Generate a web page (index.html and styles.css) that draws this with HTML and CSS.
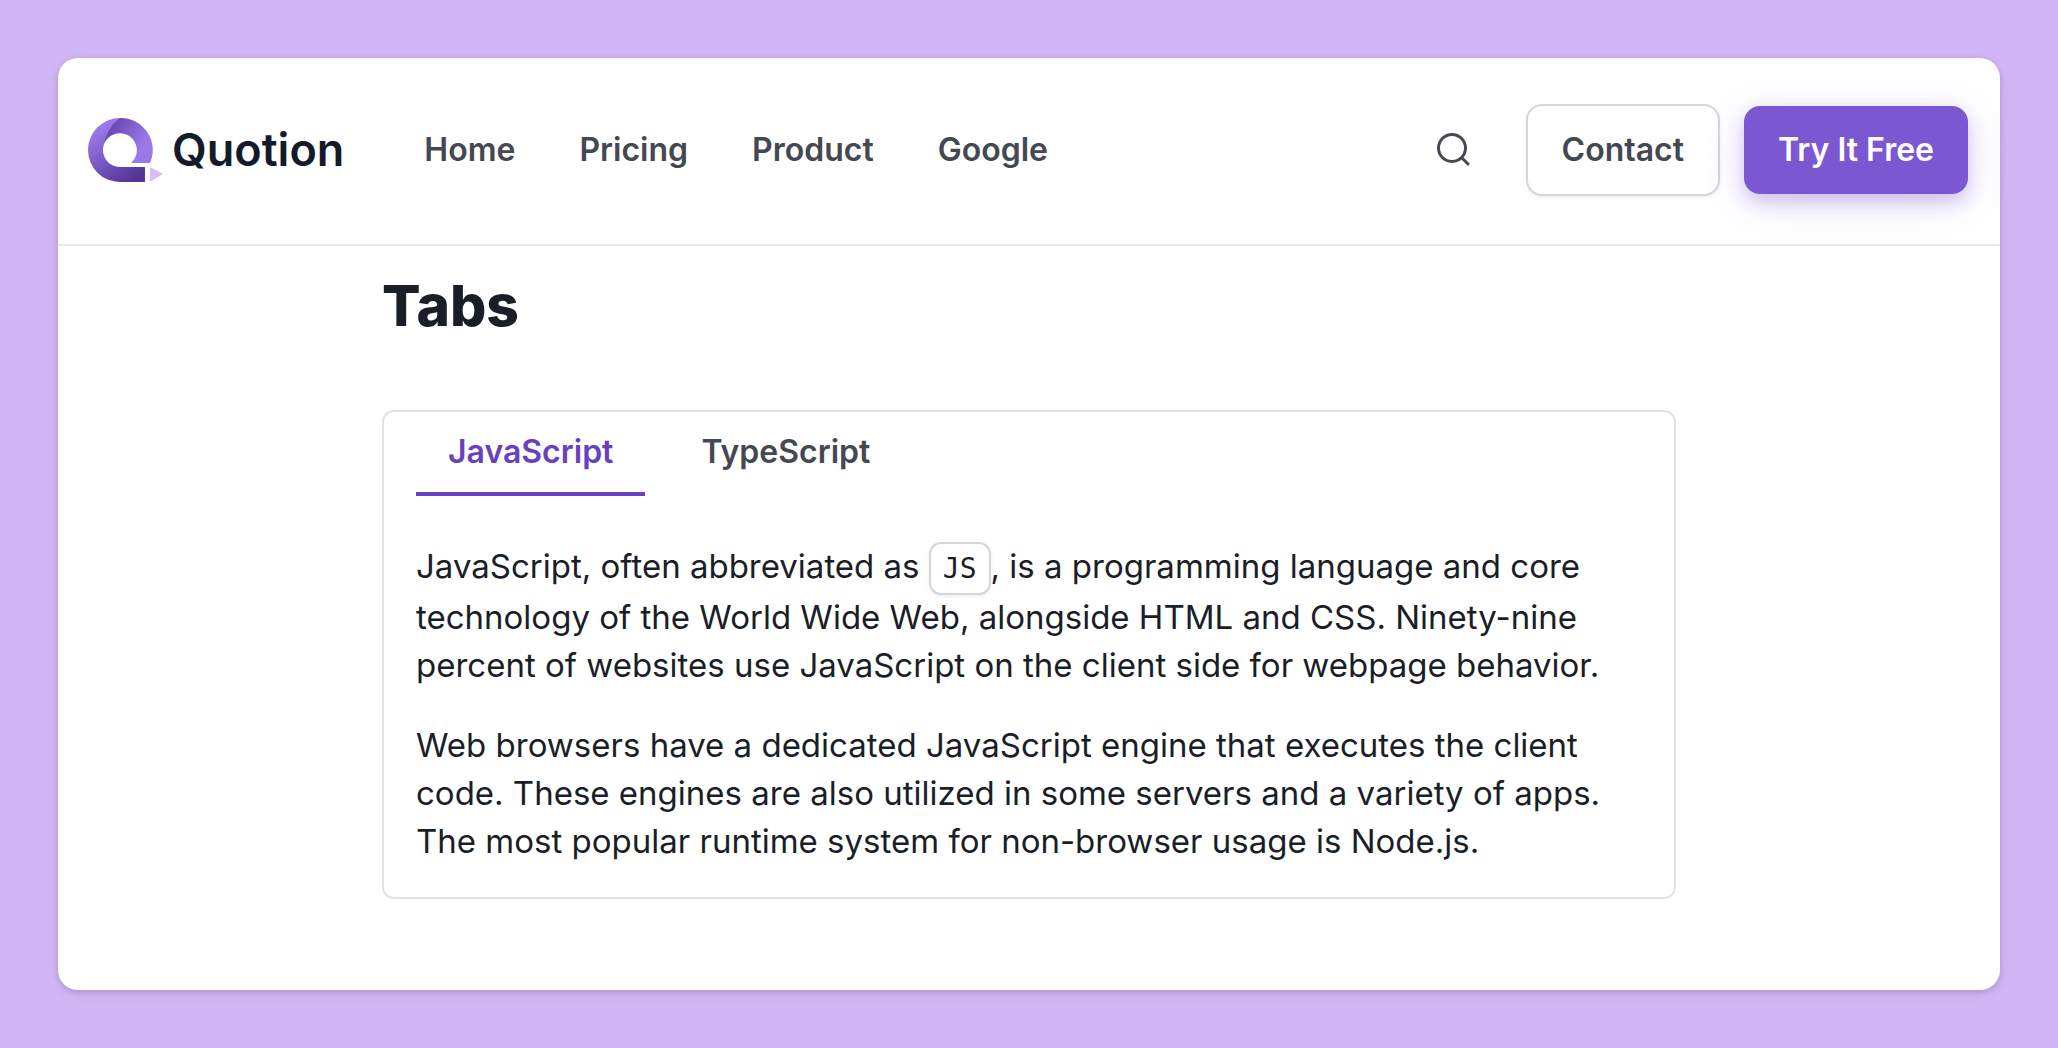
FILE: index.html
```html
<!DOCTYPE html>
<html lang="en">
<head>
    <meta charset="UTF-8">
    <meta name="viewport" content="width=device-width, initial-scale=1.0">
    <title>Quotion - Tabs</title>
    <link rel="stylesheet" href="styles.css">
</head>
<body>
    <div class="page">
        <header class="header">
            <a class="logo" href="#">
                <svg class="logo-mark" width="75" height="64" viewBox="0 0 75 64" aria-hidden="true">
                    <defs>
                        <linearGradient id="tail" x1="10" y1="12" x2="46" y2="62" gradientUnits="userSpaceOnUse">
                            <stop offset="0" stop-color="#9b78e8"/>
                            <stop offset="1" stop-color="#513495"/>
                        </linearGradient>
                        <linearGradient id="ring" x1="22" y1="8" x2="54" y2="28" gradientUnits="userSpaceOnUse">
                            <stop offset="0" stop-color="#6747b0"/>
                            <stop offset="1" stop-color="#9b78e8"/>
                        </linearGradient>
                    </defs>
                    <path fill="url(#ring)" d="M32 0A32 32 0 0 1 62 45H43A17 17 0 1 0 16 26C15 14 22 4 32 0Z"/>
                    <path fill="url(#tail)" d="M32 0A32 32 0 0 0 32 64H57V49H32A17 17 0 0 1 16 26C18 16 23 7 32 0Z"/>
                    <path fill="#d5bff8" d="M62 49L75 56L62 64Z"/>
                </svg>
                <span class="logo-text">Quotion</span>
            </a>

            <nav class="nav">
                <a href="#">Home</a>
                <a href="#">Pricing</a>
                <a href="#">Product</a>
                <a href="#">Google</a>
            </nav>

            <div class="actions">
                <button class="search" type="button" aria-label="Search">
                    <svg width="36" height="36" viewBox="0 0 36 36" fill="none" stroke="currentColor" stroke-width="3" stroke-linecap="round">
                        <circle cx="16" cy="16" r="13.5"/>
                        <path d="M26 26L32 32"/>
                    </svg>
                </button>
                <a class="btn btn-outline" href="#">Contact</a>
                <a class="btn btn-primary" href="#">Try It Free</a>
            </div>
        </header>

        <main class="content">
            <h1>Tabs</h1>

            <div class="tabs">
                <div class="tab-list" role="tablist">
                    <button class="tab current" type="button" role="tab" id="tab-js" aria-selected="true" aria-controls="panel-js">JavaScript</button>
                    <button class="tab" type="button" role="tab" id="tab-ts" aria-selected="false">TypeScript</button>
                </div>
                <div class="panel" role="tabpanel" id="panel-js" aria-labelledby="tab-js">
                    <p>JavaScript, often abbreviated as <code>JS</code>, is a programming language and core technology of the World Wide Web, alongside HTML and CSS. Ninety-nine percent of websites use JavaScript on the client side for webpage behavior.</p>
                    <p>Web browsers have a dedicated JavaScript engine that executes the client code. These engines are also utilized in some servers and a variety of apps. The most popular runtime system for non-browser usage is Node.js.</p>
                </div>
            </div>
        </main>
    </div>
</body>
</html>
```
FILE: styles.css
```css
*{
    box-sizing: border-box;
    margin: 0;
    padding: 0;
}
body{
    min-height: 100vh;
    padding: 58px;
    display: flex;
    background-color: #d2b5f6;
    color: #1a1e27;
    font-family: Inter, "Liberation Sans", sans-serif;
    font-size: 32px;
    line-height: 48px;
}
a{
    color: inherit;
    text-decoration: none;
}
button{
    border: none;
    background: none;
    font: inherit;
    color: inherit;
    cursor: pointer;
}
svg{
    display: block;
}
.page{
    flex: 1;
    background-color: #fff;
    border-radius: 20px;
    box-shadow: 0 2px 6px rgba(0, 0, 0, .16), 0 4px 16px rgba(0, 0, 0, .04);
}

/* header */
.header{
    display: flex;
    align-items: center;
    padding: 46px 32px 48px 30px;
    border-bottom: 2px solid #e9e9e9;
    color: #444851;
    font-weight: 600;
}
.logo{
    display: flex;
    align-items: center;
    gap: 9px;
}
.logo-text{
    color: #151a2b;
    font-size: 45px;
}
.nav{
    display: flex;
    gap: 64px;
    margin-left: 80px;
}
.actions{
    display: flex;
    align-items: center;
    gap: 24px;
    margin-left: auto;
}
.search{
    padding: 0 30px;
}
.btn{
    padding: 20px 34px;
    border-radius: 16px;
    white-space: nowrap;
}
.btn-outline{
    border: 2px solid #d5d5da;
    box-shadow: 0 2px 4px rgba(0, 0, 0, .06);
}
.btn-primary{
    background-color: #7c57d2;
    color: #fff;
    box-shadow: 0 8px 40px rgba(124, 87, 210, .2), 0 8px 16px rgba(124, 87, 210, .25);
}

/* content */
.content{
    max-width: 1294px;
    margin: 0 auto;
    padding: 28px 0;
}
h1{
    margin-bottom: 72px;
    font-size: 57px;
    font-weight: 800;
    line-height: 64px;
}
.tabs{
    border: 2px solid #e3e3e3;
    border-radius: 12px;
}
.tab-list{
    display: flex;
    gap: 24px;
    padding: 0 32px;
}
.tab{
    padding: 16px 32px;
    border-bottom: 4px solid transparent;
    color: #444851;
    font-weight: 600;
}
.tab.current{
    border-bottom-color: #6741c0;
    color: #6741c0;
}
.panel{
    padding: 46px 32px 32px;
    font-size: 33px;
}
.panel p + p{
    margin-top: 32px;
}
.panel code{
    padding: 8px 12px;
    border: 2px solid #d5d5da;
    border-radius: 12px;
    box-shadow: 0 2px 4px rgba(0, 0, 0, .06);
    font-family: "DejaVu Sans Mono", monospace;
    font-size: 28px;
}
```
